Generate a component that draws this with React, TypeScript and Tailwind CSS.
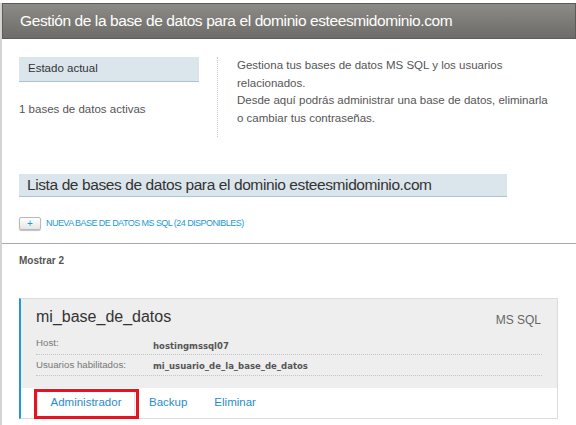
const FONT = { fontFamily: '"Liberation Sans", Arial, sans-serif' };

function InfoRow({
  label,
  value,
  tall = false,
}: {
  label: string;
  value: string;
  tall?: boolean;
}) {
  return (
    <div
      className={
        "flex items-end border-b border-dotted border-[#c4c4c4] " +
        (tall ? "h-[26px] pb-[3px]" : "h-[21px] pb-[4px]")
      }
    >
      <span className={"w-[117px] shrink-0 text-[9.7px] leading-[11px] text-[#777] " + (tall ? "mb-[3px]" : "mb-[1px]")}>
        {label}
      </span>
      <span
        className="text-[8.5px] font-bold leading-[10px] text-[#555]"
        style={{ fontFamily: '"DejaVu Sans", Verdana, sans-serif' }}
      >
        {value}
      </span>
    </div>
  );
}

function DatabaseCard() {
  return (
    <div className="border border-l-2 border-[#dcdcdc] border-l-[#1b9bd7]">
      <div className="bg-[#eeeeee] px-[15px] pb-[12px] pt-[7px]">
        <div className="flex items-start justify-between">
          <span className="text-[16px] leading-[22px] text-[#333]">mi_base_de_datos</span>
          <span className="mr-[1px] mt-[5px] text-[12px] text-[#666]">MS SQL</span>
        </div>
        <div>
          <InfoRow label="Host:" value="hostingmssql07" tall />
          <InfoRow label="Usuarios habilitados:" value="mi_usuario_de_la_base_de_datos" />
        </div>
      </div>
      <div className="relative flex h-[30px] items-center pl-[16px] text-[11.5px] text-[#2a8ccf]">
        <span className="flex h-[24px] w-[98px] items-center justify-center border-l border-r border-[#e4e4e4]">
          Administrador
        </span>
        <span className="ml-[14px]">Backup</span>
        <span className="ml-[27px]">Eliminar</span>
        <div className="absolute left-[13px] top-[1px] h-[30px] w-[105px] border-[3px] border-[#e8131e]" />
      </div>
    </div>
  );
}

export default function App() {
  return (
    <div className="min-h-[425px] w-[576px] bg-white pt-[3px]" style={FONT}>
      <div className="min-h-[422px] border-l-2 border-[#d4d4d4]">
        <header className="flex h-[36px] items-center border border-[#5c5b58] bg-gradient-to-b from-[#8d8b87] to-[#6e6c68] pl-[17px]">
          <h1 className="whitespace-nowrap text-[15.5px] tracking-[-0.4px] text-white">
            Gestión de la base de datos para el dominio esteesmidominio.com
          </h1>
        </header>

        <div className="px-[17px]">
          <section className="mt-[18px] flex items-start">
            <div className="w-[180px] shrink-0">
              <div className="flex h-[25px] items-center border-b border-[#a9c3d1] bg-[#dbe6ec] pl-[9px] text-[11.5px] text-[#333]">
                Estado actual
              </div>
              <p className="mt-[19px] text-[11.5px] text-[#555]">1 bases de datos activas</p>
            </div>
            <div className="ml-[18px] h-[80px] border-l border-dotted border-[#c8c8c8] pl-[19px]">
              <p className="w-[318px] text-[11.5px] leading-[17.7px] text-[#555]">
                Gestiona tus bases de datos MS SQL y los usuarios relacionados.
                <br />
                Desde aquí podrás administrar una base de datos, eliminarla o cambiar tus contraseñas.
              </p>
            </div>
          </section>

          <section className="mt-[37px]">
            <div className="flex h-[23px] w-[488px] items-center border-b border-[#a6c6d9] bg-[#dbe6ec] pl-[8px]">
              <h2 className="whitespace-nowrap text-[15.5px] tracking-[-0.4px] text-[#333]">
                Lista de bases de datos para el dominio esteesmidominio.com
              </h2>
            </div>
            <div className="mt-[20px] flex items-center">
              <span className="flex h-[13px] w-[22px] items-center justify-center rounded-[2px] border border-[#b8b8b8] bg-gradient-to-b from-white to-[#e6e6e6] text-[10px] leading-none text-[#1e9ad6] shadow-[0_1px_1px_rgba(0,0,0,0.25)]">
                +
              </span>
              <span className="ml-[5px] text-[9px] tracking-[-0.55px] text-[#1e9ad6]">
                NUEVA BASE DE DATOS MS SQL (24 DISPONIBLES)
              </span>
            </div>
          </section>
        </div>

        <div className="mt-[12px] h-px bg-[#a9a9a9]" />

        <div className="px-[17px]">
          <p className="mt-[9px] text-[10px] font-bold text-[#555]">Mostrar 2</p>
          <div className="mt-[30px] w-[539px]">
            <DatabaseCard />
          </div>
        </div>
      </div>
    </div>
  );
}
